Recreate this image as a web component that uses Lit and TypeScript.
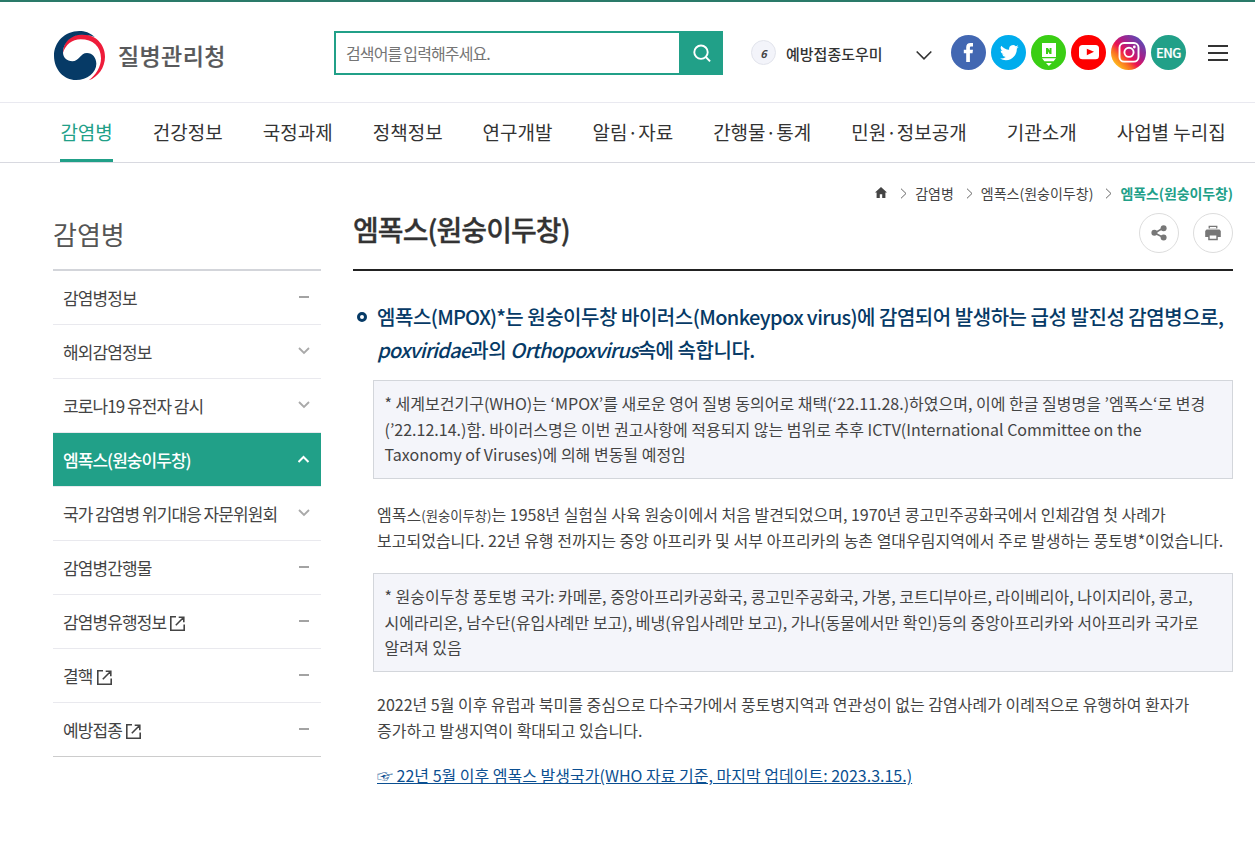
import { LitElement, html, svg, css, nothing } from "lit";
import { customElement } from "lit/decorators.js";
import { classMap } from "lit/directives/class-map.js";

const NAV = ["감염병", "건강정보", "국정과제", "정책정보", "연구개발", "알림·자료", "간행물·통계", "민원·정보공개", "기관소개", "사업별 누리집"];

type Mark = "minus" | "down" | "up";
const SIDE: { label: string; mark: Mark; active?: boolean; ext?: boolean }[] = [
  { label: "감염병정보", mark: "minus" },
  { label: "해외감염정보", mark: "down" },
  { label: "코로나19 유전자 감시", mark: "down" },
  { label: "엠폭스(원숭이두창)", mark: "up", active: true },
  { label: "국가 감염병 위기대응 자문위원회", mark: "down" },
  { label: "감염병간행물", mark: "minus" },
  { label: "감염병유행정보", mark: "minus", ext: true },
  { label: "결핵", mark: "minus", ext: true },
  { label: "예방접종", mark: "minus", ext: true },
];

const MARKS = {
  minus: svg`<path d="M1 6H11" stroke="#a3a3a3" stroke-width="2" fill="none"/>`,
  down: svg`<path d="M1 3L6 8L11 3" stroke="#a9a9a9" stroke-width="1.8" fill="none"/>`,
  up: svg`<path d="M0.5 9L5.5 4L10.5 9" stroke="#fff" stroke-width="2" fill="none"/>`,
};

@customElement("kdca-header")
class KdcaHeader extends LitElement {
  static styles = css`
    :host { display: block; border-top: 2px solid #2a7a69; }
    .top { display: flex; box-sizing: border-box; height: 101px; padding-left: 54px; align-items: flex-start; border-bottom: 1px solid #e9e9f0; }
    .logo { display: flex; width: 280px; padding-top: 29px; }
    .logo svg { display: block; }
    .name { margin-left: 13px; font-size: 23px; line-height: 49px; font-weight: 500; color: #58595b; letter-spacing: 0.4px; -webkit-text-stroke: 0.2px #58595b; }
    .search { display: flex; box-sizing: border-box; width: 389px; height: 44px; margin-top: 29px; border: 2px solid #21a088; }
    .ph { flex: 1; padding-left: 10px; font-size: 16px; line-height: 40px; letter-spacing: -0.9px; word-spacing: -0.6px; color: #757575; }
    .go { display: block; width: 42px; height: 40px; background: #21a088; }
    .rank { display: flex; box-sizing: border-box; align-items: center; justify-content: center; width: 25px; height: 25px; margin: 38px 0 0 28px; border: 1px solid #e2e4ec; border-radius: 50%; background: #f3f4fa; font-size: 11px; font-style: italic; font-weight: 700; color: #444; padding-top: 1px; }
    .word { margin: 37px 0 0 10px; width: 130px; font-size: 15px; line-height: 29px; font-weight: 500; color: #333; white-space: nowrap; }
    .arrow { margin-top: 48px; width: 16px; height: 11px; }
    .sns { display: flex; gap: 5px; margin: 33px 0 0 19px; }
    .sns svg, .eng { display: block; width: 35px; height: 35px; }
    .eng { border-radius: 50%; background: #21a088; color: #fff; font-size: 13px; font-weight: 500; letter-spacing: -0.5px; text-align: center; line-height: 35px; -webkit-text-stroke: 0.2px #fff; }
    .burger { display: flex; flex-direction: column; gap: 5px; width: 20px; margin: 43px 0 0 22px; }
    .burger i { height: 2px; background: #333; }
    nav { display: flex; gap: 40px; box-sizing: border-box; height: 60px; padding-left: 60.4px; border-bottom: 1px solid #d8d9e0; white-space: nowrap; }
    nav a { box-sizing: border-box; height: 59px; font-size: 19px; line-height: 57px; color: #333; }
    nav a.on { color: #21a088; border-bottom: 3px solid #21a088; }
  `;
  render() {
    return html`
      <div class="top">
        <div class="logo">
          <svg width="51" height="50" viewBox="0 0 153 150">
            <path fill="#ee1c3a" d="M27 66C27 30 52 10 84 10C124 10 153 40 153 77C153 110 132 138 104 148C126 132 141 108 141 82C141 46 116 25 80 25C54 25 34 42 27 66Z"/>
            <path fill="#063a66" d="M122 18C108 5 92 0 76 0C32 0 0 34 0 74C0 116 30 147 66 147C100 147 127 124 127 98C127 80 115 66 99 66C79 66 75 91 55 91C39 91 27 80 27 64C27 34 52 11 84 11C98 11 110 13 122 18Z"/>
          </svg>
          <span class="name">질병관리청</span>
        </div>
        <div class="search">
          <span class="ph">검색어를 입력해주세요.</span>
          <svg class="go" viewBox="0 0 42 40" fill="none" stroke="#fff" stroke-width="1.9"><circle cx="22" cy="19.2" r="6.7"/><path d="M26.8 24L31.1 28.4"/></svg>
        </div>
        <span class="rank">6</span>
        <span class="word">예방접종도우미</span>
        <svg class="arrow" viewBox="0 0 16 11" fill="none" stroke="#333" stroke-width="1.6"><path d="M0.7 1.5L8 8.8L15.3 1.5"/></svg>
        <div class="sns">
          <svg viewBox="0 0 35 35"><circle cx="17.5" cy="17.5" r="17.5" fill="#4267b2"/><path fill="#fff" d="M15.2 27V18.3H12.8V14.7H15.2V12.3C15.2 9.5 16.8 8 19.4 8H22V11.4H20.3C19.3 11.4 18.9 11.9 18.9 12.8V14.7H22L21.5 18.3H18.9V27Z"/></svg>
          <svg viewBox="0 0 35 35"><circle cx="17.5" cy="17.5" r="17.5" fill="#00aced"/><path fill="#fff" transform="translate(9 8.3) scale(.78)" d="M23.95 4.57a10 10 0 0 1-2.82.77 4.96 4.96 0 0 0 2.16-2.72c-.95.55-2 .95-3.13 1.18a4.92 4.92 0 0 0-8.38 4.48C7.69 8.1 4.07 6.13 1.64 3.16a4.92 4.92 0 0 0 1.52 6.57 4.9 4.9 0 0 1-2.23-.61v.06a4.92 4.92 0 0 0 3.95 4.83 5 5 0 0 1-2.21.08 4.94 4.94 0 0 0 4.6 3.42A9.87 9.87 0 0 1 0 19.54a13.99 13.99 0 0 0 7.55 2.21c9.05 0 14-7.5 14-13.98l-.02-.64a9.94 9.94 0 0 0 2.42-2.56z"/></svg>
          <svg viewBox="0 0 35 35"><circle cx="17.5" cy="17.5" r="17.5" fill="#3ace14"/><path fill="#fff" d="M11 8H25V22H11ZM11 23.2H25L22.6 26.3H13.4ZM15 28H20.8L17.9 31Z"/><path fill="#3ace14" d="M15 13H17L18.6 15.6V13H20.5V19H18.6L17 16.4V19H15Z"/></svg>
          <svg viewBox="0 0 35 35"><circle cx="17.5" cy="17.5" r="17.5" fill="#fe0000"/><rect x="8" y="10" width="20" height="14.3" rx="3.5" fill="#fff"/><path fill="#fe0000" d="M15.8 13.7L23 16.8L15.8 20.2Z"/></svg>
          <svg viewBox="0 0 35 35">
            <defs><linearGradient id="ig" x1="0.1" y1="0.85" x2="0.85" y2="0.1"><stop offset="0" stop-color="#fec31d"/><stop offset=".25" stop-color="#fa6b22"/><stop offset=".42" stop-color="#ec1250"/><stop offset=".65" stop-color="#a81f8a"/><stop offset="1" stop-color="#5b4bb5"/></linearGradient></defs>
            <circle cx="17.5" cy="17.5" r="17.5" fill="url(#ig)"/>
            <g fill="none" stroke="#fff" stroke-width="1.9"><rect x="8.5" y="8" width="19" height="18.6" rx="4.6"/><circle cx="18" cy="17.3" r="4.6"/></g><circle cx="23.3" cy="12" r="1.4" fill="#fff"/>
          </svg>
          <span class="eng">ENG</span>
        </div>
        <div class="burger"><i></i><i></i><i></i></div>
      </div>
      <nav>${NAV.map((n, i) => html`<a class=${classMap({ on: i === 0 })}>${n}</a>`)}</nav>
    `;
  }
}

@customElement("kdca-side")
class KdcaSide extends LitElement {
  static styles = css`
    :host { display: block; width: 268px; }
    h2 { margin: 0; height: 106px; border-bottom: 2px solid #d3d5da; font-size: 26px; font-weight: 400; line-height: 142px; color: #555; }
    .item { display: flex; box-sizing: border-box; height: 54px; align-items: center; padding: 0 11px 0 10px; border-bottom: 1px solid #e9e9ee; font-size: 17px; letter-spacing: -0.87px; word-spacing: -0.4px; color: #444; white-space: nowrap; }
    .item:last-child { border-bottom-color: #ccc; }
    .item.on { background: #21a088; color: #fff; font-weight: 500; letter-spacing: -0.95px; }
    .label { flex: 1; display: flex; align-items: center; padding-bottom: 1px; }
    .ext { display: block; margin: 5px 0 0 4px; }
    .mark { display: block; margin-bottom: 2px; }
  `;
  render() {
    return html`
      <h2>감염병</h2>
      ${SIDE.map(
        (s) => html`<div class=${classMap({ item: true, on: !!s.active })}>
          <span class="label">${s.label}${s.ext
            ? html`<svg class="ext" width="15" height="15" viewBox="0 0 15 15" fill="none" stroke="#444" stroke-width="1.6"><path d="M6 0.8H0.8V14.2H14.2V8.5M5.8 9.2L13 2M8.7 1.2H13.8V6.3"/></svg>`
            : nothing}</span>
          <svg class="mark" width="12" height="12" viewBox="0 0 12 12">${MARKS[s.mark]}</svg>
        </div>`
      )}
    `;
  }
}

@customElement("kdca-article")
class KdcaArticle extends LitElement {
  static styles = css`
    :host { display: block; width: 880px; color: #444; font-size: 16px; line-height: 25.6px; white-space: nowrap; }
    .crumbs { display: flex; height: 50px; align-items: center; justify-content: flex-end; box-sizing: border-box; padding-top: 9px; font-size: 14px; line-height: 20px; }
    .crumbs svg { display: block; margin-top: 1px; }
    .crumbs .home { margin: 0 1px 0 0; }
    .crumbs .sep { margin: 1px 8px 0 12px; }
    .crumbs b { font-weight: 700; color: #21a088; letter-spacing: -0.1px; }
    .head { display: flex; justify-content: space-between; height: 56px; border-bottom: 2px solid #222; }
    h1 { margin: 0; font-size: 28px; line-height: 32px; font-weight: 500; letter-spacing: -0.93px; color: #333; -webkit-text-stroke: 0.3px #333; }
    .tools { display: flex; gap: 14px; }
    .tool { display: flex; box-sizing: border-box; width: 40px; height: 40px; align-items: center; justify-content: center; border: 1px solid #ddd; border-radius: 50%; }
    .lead { display: flex; height: 67px; margin: 29px 0 13px 4px; color: #063a66; font-size: 20px; line-height: 33px; font-weight: 500; letter-spacing: -0.46px; }
    .lead em { letter-spacing: -0.78px; }
    .abbr { letter-spacing: -0.8px; }
    .latin { letter-spacing: -0.64px; }
    .ring { box-sizing: border-box; flex: none; width: 10px; height: 10px; margin: 12px 10px 0 0; border: 3px solid #063a66; border-radius: 50%; }
    .box { box-sizing: border-box; height: 99px; margin-left: 20px; padding: 10px 10px 10px 10.5px; border: 1px solid #d3d6db; background: #f4f5fa; }
    p { margin: 22.5px 0 19.5px 24px; }
    .box ~ .box + p { margin: 19.8px 0 20px 24px; }
    small { font-size: 13.33px; }
    .link { display: inline-block; margin-left: 24px; color: #0b4f91; text-decoration: underline; }
  `;
  render() {
    const sep = html`<svg class="sep" width="7" height="11" viewBox="0 0 7 11" fill="none" stroke="#666"><path d="M1 0.7L6 5.5L1 10.3"/></svg>`;
    return html`
      <div class="crumbs">
        <svg class="home" width="12" height="11" viewBox="0 0 12 11"><path fill="#444" d="M6 0L12 5.6H10.4V11H7.2V7.3H4.8V11H1.6V5.6H0Z"/></svg>
        ${sep}<span>감염병</span>${sep}<span>엠폭스(원숭이두창)</span>${sep}<b>엠폭스(원숭이두창)</b>
      </div>
      <div class="head">
        <h1>엠폭스(원숭이두창)</h1>
        <div class="tools">
          <span class="tool"><svg width="16" height="16" viewBox="0 0 16 16" fill="#777"><path d="M3.5 8L12.5 3M3.5 8L12.5 12.5" stroke="#777" stroke-width="1.6"/><circle cx="3.4" cy="7.8" r="3"/><circle cx="12.6" cy="3.2" r="3"/><circle cx="12.6" cy="12.6" r="3"/></svg></span>
          <span class="tool"><svg width="16" height="16" viewBox="0 0 16 16" fill="#777"><path d="M3.6 0.7H12.4V3.6H3.6ZM1.5 4.5H14.5L15.8 6V12H12.8V9.5H3.2V12H0.2V6ZM3.2 9.2H12.8V15.2H3.2Z"/><path fill="#fff" d="M4.9 2H11.1V3.6H4.9ZM4.7 10.5H11.3V13.8H4.7Z"/></svg></span>
        </div>
      </div>
      <div class="lead"><span class="ring"></span><div>엠폭스<span class="abbr">(MPOX)*</span>는 원숭이두창 바이러스<span class="latin">(Monkeypox virus)</span>에 감염되어 발생하는 급성 발진성 감염병으로,<br><em>poxviridae</em>과의 <em>Orthopoxvirus</em>속에 속합니다.</div></div>
      <div class="box">* 세계보건기구(WHO)는 ‘MPOX’를 새로운 영어 질병 동의어로 채택(‘22.11.28.)하였으며, 이에 한글 질병명을 ’엠폭스‘로 변경<br>(’22.12.14.)함. 바이러스명은 이번 권고사항에 적용되지 않는 범위로 추후 ICTV(International Committee on the<br>Taxonomy of Viruses)에 의해 변동될 예정임</div>
      <p>엠폭스<small>(원숭이두창)</small>는 1958년 실험실 사육 원숭이에서 처음 발견되었으며, 1970년 콩고민주공화국에서 인체감염 첫 사례가<br>보고되었습니다. 22년 유행 전까지는 중앙 아프리카 및 서부 아프리카의 농촌 열대우림지역에서 주로 발생하는 풍토병*이었습니다.</p>
      <div class="box">* 원숭이두창 풍토병 국가: 카메룬, 중앙아프리카공화국, 콩고민주공화국, 가봉, 코트디부아르, 라이베리아, 나이지리아, 콩고,<br>시에라리온, 남수단(유입사례만 보고), 베냉(유입사례만 보고), 가나(동물에서만 확인)등의 중앙아프리카와 서아프리카 국가로<br>알려져 있음</div>
      <p>2022년 5월 이후 유럽과 북미를 중심으로 다수국가에서 풍토병지역과 연관성이 없는 감염사례가 이례적으로 유행하여 환자가<br>증가하고 발생지역이 확대되고 있습니다.</p>
      <a class="link">☞ 22년 5월 이후 엠폭스 발생국가(WHO 자료 기준, 마지막 업데이트: 2023.3.15.)</a>
    `;
  }
}

@customElement("app-root")
class AppRoot extends LitElement {
  static styles = css`
    :host { display: block; width: 1255px; height: 850px; overflow: hidden; background: #fff; font-family: "Noto Sans CJK KR", "Noto Sans", sans-serif; }
    main { display: flex; gap: 32px; padding-left: 53px; }
  `;
  render() {
    return html`<kdca-header></kdca-header><main><kdca-side></kdca-side><kdca-article></kdca-article></main>`;
  }
}
